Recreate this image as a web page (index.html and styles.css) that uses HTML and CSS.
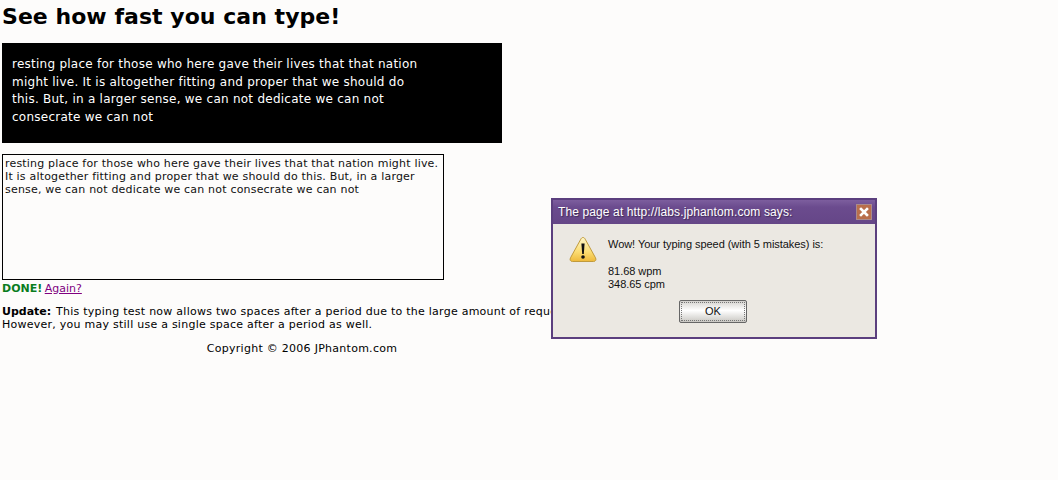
FILE: index.html
```html
<!DOCTYPE html>
<html lang="en">
<head>
  <meta charset="UTF-8" />
  <title>See how fast you can type!</title>
  <link rel="stylesheet" href="styles.css">
</head>
<body>
  <div class="container">
    <h1>See how fast you can type!</h1>
    <div class="sample">resting place for those who here gave their lives that that nation might live. It is altogether fitting and proper that we should do this. But, in a larger sense, we can not dedicate we can not consecrate we can not</div>
    <textarea class="typing" spellcheck="false">resting place for those who here gave their lives that that nation might live. It is altogether fitting and proper that we should do this. But, in a larger sense, we can not dedicate we can not consecrate we can not</textarea>
    <div class="status"><strong class="done">DONE!</strong> <a href="#">Again?</a></div>
    <p class="update"><strong>Update:</strong> This typing test now allows two spaces after a period due to the large amount of requests.<br>However, you may still use a single space after a period as well.</p>
    <p class="copyright">Copyright © 2006 JPhantom.com</p>
  </div>

  <div class="dialog">
    <div class="dialog-title">
      <span>The page at http://labs.jphantom.com says:</span>
      <span class="dialog-close">
        <svg width="10" height="10" viewBox="0 0 10 10"><path d="M2 2l6 6M8 2l-6 6" stroke="#fff" stroke-width="2.600" stroke-linecap="square"/></svg>
      </span>
    </div>
    <div class="dialog-body">
      <svg class="warn" width="28" height="27" viewBox="0 0 28 27">
        <defs>
          <linearGradient id="warnFill" x1="0" y1="0" x2="0" y2="1">
            <stop offset="0" stop-color="#fff6c8"/>
            <stop offset="0.6" stop-color="#fbdc72"/>
            <stop offset="1" stop-color="#eeb93a"/>
          </linearGradient>
        </defs>
        <path d="M14 1.500c-1 0-1.600.6-2.200 1.700L1.500 21.800C.5 23.700 1.300 25.500 3.500 25.500h21c2.200 0 3-1.800 2-3.700L16.200 3.200C15.600 2.100 15 1.500 14 1.500z" fill="url(#warnFill)" stroke="#c09a3c"/>
        <path d="M12.400 7.500h3.200l-.8 10.500h-1.600z" fill="#111"/>
        <circle cx="14" cy="21" r="1.800" fill="#111"/>
      </svg>
      <div class="dialog-text">
        <p>Wow! Your typing speed (with 5 mistakes) is:</p>
        <p>81.68 wpm<br>348.65 cpm</p>
      </div>
    </div>
    <div class="dialog-actions">
      <button class="ok"><span>OK</span></button>
    </div>
  </div>
</body>
</html>
```

FILE: styles.css
```css
body {
  font-family: "DejaVu Sans", Verdana, sans-serif;
  font-size: 11px;
  margin: 0;
  padding: 0 2px;
  background: #fdfcfb;
  color: #000;
}

.container {
  width: 600px;
}

h1 {
  font-size: 22px;
  line-height: 27px;
  letter-spacing: 0.04px;
  margin: 3px 0 13px;
}

.sample {
  width: 410px;
  height: 77px;
  padding: 13px 80px 10px 10px;
  background: #000;
  color: #fff;
  font-size: 12px;
  line-height: 17.700px;
  letter-spacing: 0.25px;
}

.typing {
  display: block;
  box-sizing: border-box;
  width: 442px;
  height: 126px;
  margin: 11px 0 0;
  padding: 2px 3px 2px 2px;
  border: 1px solid #000;
  border-radius: 0;
  outline: none;
  resize: none;
  overflow: hidden;
  background: #fdfcfb;
  color: #111;
  font-family: inherit;
  font-size: 11px;
  line-height: 13px;
  letter-spacing: 0.19px;
}

.status {
  margin-top: 2px;
  line-height: 13px;
}

.done {
  color: #0a7d1e;
  margin-right: -1px;
}

.status a {
  color: #800080;
}

.update {
  margin: 10px 0 0;
  line-height: 13px;
  letter-spacing: 0.25px;
}

.update strong {
  letter-spacing: 0;
  margin-right: 1px;
}

.copyright {
  margin: 11px 0 0;
  text-align: center;
  line-height: 13px;
  letter-spacing: 0.27px;
}

.dialog {
  position: absolute;
  left: 551px;
  top: 198px;
  box-sizing: border-box;
  width: 326px;
  height: 141px;
  border: 2px solid #5b3f7e;
  background: #ebe8e2;
  font-family: "Liberation Sans", Arial, sans-serif;
  font-size: 11px;
  color: #111;
}

.dialog-title {
  display: flex;
  align-items: center;
  justify-content: space-between;
  height: 24px;
  padding: 0 3px 0 5px;
  background: linear-gradient(#7d5e9e, #6b4b8e 30%, #654687);
  color: #fff;
  font-size: 12px;
  letter-spacing: 0.12px;
  text-shadow: 1px 1px 1px #3c2a55;
}

.dialog-close {
  display: flex;
  align-items: center;
  justify-content: center;
  width: 14px;
  height: 14px;
  border: 1px solid #a98a8c;
  background: #b96f4c;
}

.dialog-body {
  display: flex;
  padding: 12px 0 0 16px;
}

.warn {
  flex: none;
}

.dialog-text {
  margin-left: 11px;
  padding-top: 2px;
  letter-spacing: -0.05px;
}

.dialog-text p {
  margin: 0 0 14px;
  line-height: 13px;
}

.dialog-text p:last-child {
  margin-bottom: 0;
}

.dialog-actions {
  display: flex;
  justify-content: center;
  margin-top: 9px;
  padding-right: 2px;
}

.ok {
  box-sizing: border-box;
  width: 68px;
  height: 23px;
  padding: 1px;
  border: 1px solid #666;
  border-radius: 2px;
  background: linear-gradient(#d4d2ce, #ffffff 45%, #c9c7c2);
  font-family: inherit;
  font-size: 11px;
  color: #111;
}

.ok span {
  display: block;
  height: 100%;
  line-height: 17px;
  border: 1px dotted #777;
  box-sizing: border-box;
}
```
